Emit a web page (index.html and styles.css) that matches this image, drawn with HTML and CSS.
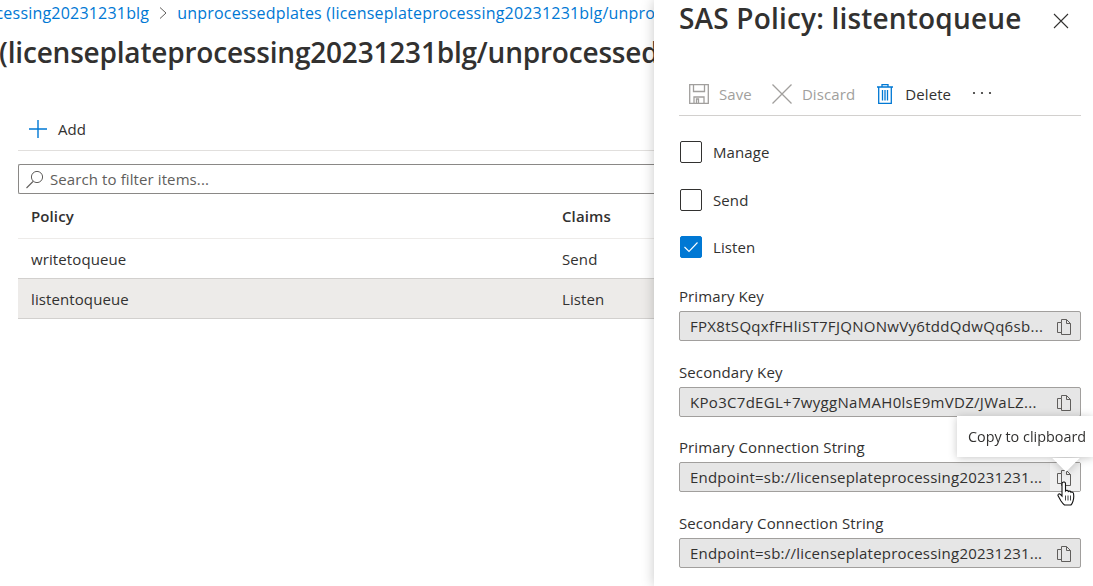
FILE: index.html
```html
<!DOCTYPE html>
<html lang="en">
<head>
  <meta charset="UTF-8">
  <title>SAS Policy: listentoqueue</title>
  <link rel="stylesheet" href="styles.css">
</head>
<body>
  <main class="blade">
    <nav class="crumbs">
      <a>licenseplateprocessing20231231blg</a>
      <svg class="crumb-sep" width="8" height="14" viewBox="0 0 8 14"><path d="M1 1.500 7 7l-6 5.500" fill="none" stroke="#605e5c" stroke-width="1"/></svg>
      <a>unprocessedplates (licenseplateprocessing20231231blg/unprocessedplates)</a>
    </nav>
    <h1 class="blade-title">unprocessedplates (licenseplateprocessing20231231blg/unprocessedplates)</h1>
    <div class="add-bar">
      <svg width="20" height="20" viewBox="0 0 20 20"><path d="M10 1v18M1 10h18" stroke="#0078d4" stroke-width="1.4"/></svg>
      <span>Add</span>
    </div>
    <div class="search">
      <svg width="20" height="20" viewBox="0 0 20 20"><circle cx="12" cy="8" r="5.6" fill="none" stroke="#605e5c" stroke-width="1"/><path d="M8 12.500 1.500 19" stroke="#605e5c" stroke-width="1.100"/></svg>
      <span>Search to filter items...</span>
    </div>
    <div class="row row-head"><span class="col-policy">Policy</span><span>Claims</span></div>
    <div class="row"><span class="col-policy">writetoqueue</span><span>Send</span></div>
    <div class="row row-selected"><span class="col-policy">listentoqueue</span><span>Listen</span></div>
  </main>

  <aside class="panel">
    <header class="panel-head">
      <h2>SAS Policy: listentoqueue</h2>
      <svg width="16" height="16" viewBox="0 0 16 16"><path d="M1 1l14 14M15 1 1 15" stroke="#323130" stroke-width="1.100"/></svg>
    </header>

    <div class="toolbar">
      <span class="tool disabled">
        <svg width="20" height="20" viewBox="0 0 20 20" fill="none" stroke="#a19f9d" stroke-width="1.300"><path d="M.7.7h18.600v18.600H.7zM4.500.7v6.800h11V.7M5 19.300v-6.300h10v6.300M7.500 15h2v4.300h-2z"/></svg>
        Save
      </span>
      <span class="tool disabled wide-gap">
        <svg width="20" height="20" viewBox="0 0 20 20"><path d="M.5.5l19 19M19.500.5l-19 19" stroke="#a19f9d" stroke-width="1.300"/></svg>
        Discard
      </span>
      <span class="tool delete">
        <svg width="16" height="20" viewBox="0 0 16 20" fill="none" stroke="#0078d4" stroke-width="1.300"><path d="M0 3h16M5 3V.7h6V3M1.700 3v16.300h12.600V3M5.500 6v10.500M8 6v10.500M10.500 6v10.500"/></svg>
        Delete
      </span>
      <svg class="more" width="20" height="4" viewBox="0 0 20 4"><circle cx="2" cy="2" r="1.100" fill="#323130"/><circle cx="10" cy="2" r="1.100" fill="#323130"/><circle cx="18" cy="2" r="1.100" fill="#323130"/></svg>
    </div>

    <label class="check"><span class="box"></span>Manage</label>
    <label class="check"><span class="box"></span>Send</label>
    <label class="check"><span class="box checked"><svg width="16" height="12" viewBox="0 0 16 12"><path d="M1.500 6l4.500 4.500L14.500 1.500" fill="none" stroke="#fff" stroke-width="1.100"/></svg></span>Listen</label>

    <div class="field first">
      <div class="field-label">Primary Key</div>
      <div class="field-box">
        <span class="value">FPX8tSQqxfFHliST7FJQNONwVy6tddQdwQq6sb...</span>
        <span class="copy"><svg width="14" height="16" viewBox="0 0 14 16" fill="none" stroke="#605e5c"><path d="M4.500 3.500V.5h5l4 4v11h-9zM4.500 3.500h-4v10h4M9.500.5v4h4"/></svg></span>
      </div>
    </div>
    <div class="field">
      <div class="field-label">Secondary Key</div>
      <div class="field-box">
        <span class="value">KPo3C7dEGL+7wyggNaMAH0lsE9mVDZ/JWaLZ...</span>
        <span class="copy"><svg width="14" height="16" viewBox="0 0 14 16" fill="none" stroke="#605e5c"><path d="M4.500 3.500V.5h5l4 4v11h-9zM4.500 3.500h-4v10h4M9.500.5v4h4"/></svg></span>
      </div>
    </div>
    <div class="field">
      <div class="field-label">Primary Connection String</div>
      <div class="field-box">
        <span class="value conn">Endpoint=sb://licenseplateprocessing20231231...</span>
        <span class="copy hovered">
          <svg width="14" height="16" viewBox="0 0 14 16" fill="none" stroke="#605e5c"><path d="M4.500 3.500V.5h5l4 4v11h-9zM4.500 3.500h-4v10h4M9.500.5v4h4"/></svg>
          <svg class="cursor" width="19" height="25" viewBox="0 0 19 25"><path d="M5.500 1.500c1-1 3-.5 3 1.200v7.300c.8-1 2.500-.8 2.800.5.900-.8 2.400-.4 2.700.8.900-.6 2.300-.1 2.500 1.200.5 3 .3 5.500-.6 8-.5 1.500-1 2.500-2 3.500H7.500c-1.500-1-2.500-2.500-3.500-4L1.200 15c-.8-1.500.9-2.800 2.200-1.700L5 15V3c0-.6.200-1.100.5-1.500z" fill="#fff" stroke="#111" stroke-width="1.100"/><path d="M8.500 14.500v5M11 14.500v5M13.500 14.500v5" stroke="#111" stroke-width=".8"/></svg>
        </span>
        <div class="tooltip">Copy to clipboard</div>
      </div>
    </div>
    <div class="field">
      <div class="field-label">Secondary Connection String</div>
      <div class="field-box">
        <span class="value conn">Endpoint=sb://licenseplateprocessing20231231...</span>
        <span class="copy"><svg width="14" height="16" viewBox="0 0 14 16" fill="none" stroke="#605e5c"><path d="M4.500 3.500V.5h5l4 4v11h-9zM4.500 3.500h-4v10h4M9.500.5v4h4"/></svg></span>
      </div>
    </div>
  </aside>
</body>
</html>
```

FILE: styles.css
```css
html, body {
  height: 586px;
  margin: 0;
  overflow: hidden;
}

body {
  display: flex;
  font-family: "Open Sans", "Noto Sans", sans-serif;
  font-size: 15px;
  letter-spacing: 0.1px;
  color: #323130;
  background-color: #fff;
}

h1, h2 {
  margin: 0;
  font-weight: 600;
}

/* left blade, cut off by the panel */
.blade {
  flex: none;
  width: 654px;
  overflow: hidden;
}

.crumbs {
  display: flex;
  align-items: center;
  gap: 10px;
  height: 25px;
  margin-left: -122px;
  white-space: nowrap;
  font-size: 16px;
  letter-spacing: 0.2px;
  color: #0078d4;
}

.crumb-sep {
  flex: none;
}

.blade-title {
  margin: 7px 0 0 -260px;
  height: 40px;
  line-height: 40px;
  font-size: 28px;
  white-space: nowrap;
  letter-spacing: -0.2px;
}

.add-bar {
  display: flex;
  align-items: center;
  gap: 10px;
  margin: 36px 0 0 18px;
  padding-left: 10px;
  height: 42px;
  border-bottom: 1px solid #e1dfdd;
}

.search {
  display: flex;
  align-items: center;
  gap: 5px;
  margin: 13px 0 0 18px;
  padding-left: 6px;
  height: 28px;
  border: 1px solid #8a8886;
  border-right: none;
  border-radius: 2px 0 0 2px;
  color: #605e5c;
}

.row {
  display: flex;
  align-items: center;
  margin-left: 18px;
  height: 39px;
  border-bottom: 1px solid #d2d0ce;
}

.row-head {
  height: 44px;
  font-weight: 600;
  border-bottom-color: #edebe9;
}

.row-selected {
  background-color: #edebe9;
}

.col-policy {
  flex: none;
  width: 531px;
  padding-left: 13px;
}

/* SAS policy panel */
.panel {
  position: relative;
  flex: none;
  width: 439px;
  box-sizing: border-box;
  padding: 0 12px 0 25px;
  background-color: #fff;
  box-shadow: 0 0 12px rgba(0, 0, 0, 0.22);
}

.panel-head {
  display: flex;
  align-items: center;
  justify-content: space-between;
  height: 41px;
  padding-right: 12px;
}

.panel-head h2 {
  margin-top: -6px;
  font-size: 28px;
  letter-spacing: 0.18px;
}

.toolbar {
  display: flex;
  align-items: center;
  margin-top: 33px;
  height: 39px;
  padding: 0 0 2px 10px;
  border-bottom: 1px solid #d2d0ce;
}

.tool {
  display: flex;
  align-items: center;
  gap: 10px;
  margin-right: 20px;
}

.tool.disabled {
  color: #a19f9d;
}

.tool.wide-gap {
  margin-right: 22px;
}

.tool.delete {
  gap: 12px;
  margin-right: 21px;
}

.more {
  margin-top: -1px;
}

.check {
  display: flex;
  align-items: center;
  gap: 11px;
  margin-top: 25.500px;
  height: 22px;
  padding-left: 1px;
}

.toolbar + .check {
  margin-top: 25px;
}

.box {
  display: flex;
  align-items: center;
  justify-content: center;
  box-sizing: border-box;
  width: 22px;
  height: 22px;
  border: 1px solid #323130;
  border-radius: 2px;
}

.box.checked {
  background-color: #0078d4;
  border-color: #0078d4;
}

.field {
  margin-top: 21.500px;
}

.field.first {
  margin-top: 29px;
}

.field-label {
  height: 24px;
  line-height: 18px;
}

.field-box {
  position: relative;
  display: flex;
  align-items: center;
  justify-content: space-between;
  box-sizing: border-box;
  height: 30px;
  padding-left: 10px;
  background-color: #e6e6e6;
  border: 1px solid #a19f9d;
  border-radius: 2px;
}

.value {
  white-space: nowrap;
  letter-spacing: 0.3px;
}

.value.conn {
  letter-spacing: 0.22px;
}

.copy {
  position: relative;
  display: flex;
  align-items: center;
  justify-content: center;
  box-sizing: border-box;
  width: 30px;
  height: 28px;
  padding: 2px 2px 0 0;
}

.copy.hovered {
  background-color: #f0f0f0;
}

.cursor {
  position: absolute;
  left: 7px;
  top: 18px;
}

.tooltip {
  position: absolute;
  right: -13px;
  bottom: 34px;
  width: 136px;
  box-sizing: border-box;
  padding: 11px 0 0 11px;
  height: 41px;
  font-size: 14.400px;
  letter-spacing: 0;
  background-color: #fff;
  filter: drop-shadow(0 1px 4px rgba(0, 0, 0, 0.22));
  white-space: nowrap;
}

.tooltip::after {
  content: "";
  position: absolute;
  left: 99px;
  bottom: -11px;
  width: 20px;
  height: 20px;
  background-color: #fff;
  transform: rotate(45deg);
  clip-path: polygon(100% 0, 100% 100%, 0 100%);
}
```
